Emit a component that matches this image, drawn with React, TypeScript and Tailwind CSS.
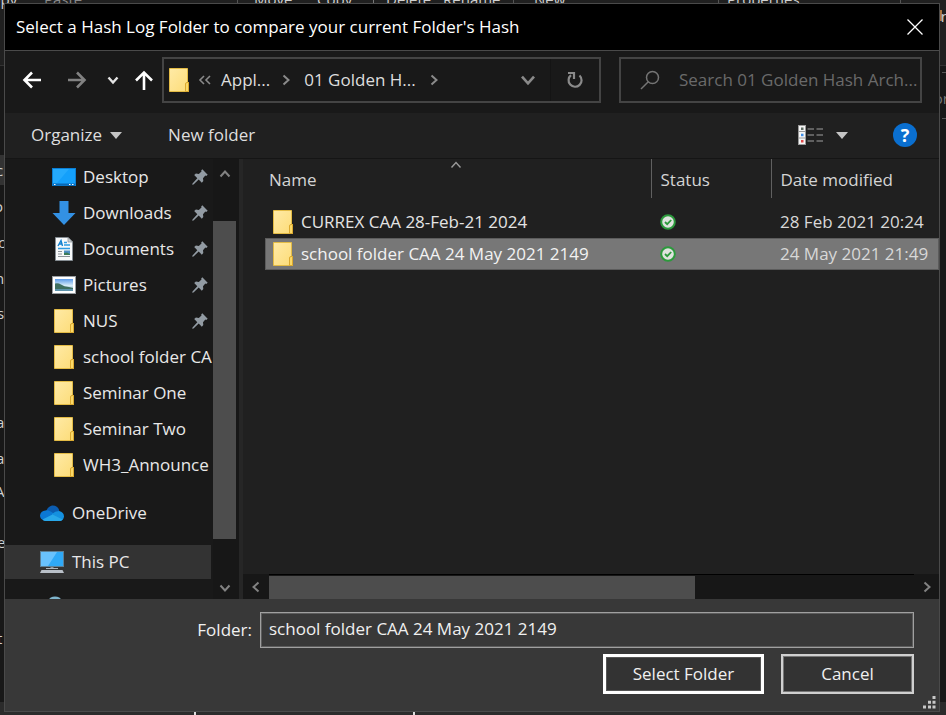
import React from "react";

const FONT = "font-['Segoe_UI','Open_Sans','Noto_Sans',sans-serif]";

function FolderIcon() {
  return (
    <svg width="20" height="24" viewBox="0 0 20 24" className="shrink-0" aria-hidden="true">
      <defs>
        <linearGradient id="folder" x1="0" y1="0" x2="1" y2="1">
          <stop offset="0" stopColor="#ffeaa6" />
          <stop offset="1" stopColor="#fcdc78" />
        </linearGradient>
      </defs>
      <path d="M.5 .5H18.5V14.5H19.5V23.5H.5Z" fill="url(#folder)" stroke="#e3bb45" />
      <path d="M16.5 23V16Q16.5 14.5 18 14.5H19.5V23.5H16.5Z" fill="#fbd968" stroke="#dba92f" />
    </svg>
  );
}

function DesktopIcon() {
  return (
    <svg width="24" height="24" viewBox="0 0 24 24" className="shrink-0" aria-hidden="true">
      <rect x=".5" y="3.500" width="23" height="17" fill="#14a0fb" stroke="#0b7fd4" />
      <path d="M1 4H17L5 18H1Z" fill="#2fb0ff" opacity=".6" />
      <path d="M1 18.500H23V20.500H1Z" fill="#0968b4" />
      <path d="M2 19h1.500v1H2zM17 19h1.500v1H17zM20 19h1.500v1H20z" fill="#fff" />
    </svg>
  );
}

function DownloadIcon() {
  return (
    <svg width="24" height="24" viewBox="0 0 24 24" className="shrink-0" aria-hidden="true">
      <path d="M7.500 0H16.500V12H23.500L12 24L.5 12H7.500Z" fill="#3391e4" />
    </svg>
  );
}

function DocumentIcon() {
  return (
    <svg width="24" height="24" viewBox="0 0 24 24" className="shrink-0" aria-hidden="true">
      <path d="M3.500 .5H16L20.500 5V23.500H3.500Z" fill="#f7f9fa" stroke="#858c92" />
      <path d="M16 .5V5H20.500Z" fill="#cfd3d6" stroke="#858c92" strokeWidth=".7" />
      <path d="M6 9L9 3.500L10.500 9M7 7H10" stroke="#1180cf" strokeWidth="1.400" fill="none" />
      <path d="M12 5.500H15M12 8H18M6 11.500H18" stroke="#2f9be0" strokeWidth="1.500" />
      <path d="M6 14.500H10M6 17H10M6 19.500H18" stroke="#8b9297" strokeWidth="1.200" />
      <rect x="12" y="13.500" width="6" height="4.500" fill="#4d8ec4" />
      <path d="M12 18V16L15 15.500L18 17V18Z" fill="#3c7a58" />
    </svg>
  );
}

function PictureIcon() {
  return (
    <svg width="24" height="24" viewBox="0 0 24 24" className="shrink-0" aria-hidden="true">
      <defs>
        <linearGradient id="sky" x1="0" y1="0" x2="0" y2="1">
          <stop offset="0" stopColor="#5a9ae8" />
          <stop offset=".55" stopColor="#d8ecf8" />
          <stop offset="1" stopColor="#6f9db4" />
        </linearGradient>
      </defs>
      <rect x=".5" y="3.500" width="23" height="17" fill="#fff" stroke="#999ea2" />
      <rect x="3" y="6" width="18" height="12" fill="url(#sky)" />
      <path d="M3 10.500Q6 9.500 9 11.500T17 14L21 15V16H3Z" fill="#3f6f60" />
      <path d="M3 16H21V18H3Z" fill="#5d93ab" />
    </svg>
  );
}

function OneDriveIcon() {
  return (
    <svg width="24" height="24" viewBox="0 0 24 24" className="shrink-0" aria-hidden="true">
      <path d="M6 12Q6.500 6 12 4.500Q18.500 4 19.500 11L13 15Z" fill="#0b5cb0" />
      <path d="M4.500 19.500Q0 18.500 0 14.500Q.5 10 5.500 9.500Q9 8.500 14 13L10 19Z" fill="#0b78d4" />
      <path d="M12 13Q15 10 19 10Q24 11 24 15.500Q23.500 19.500 20 20L12 17Z" fill="#1490df" />
      <path d="M2.500 18.500L12.500 13.500L22.500 18.500Q21.500 20 19.500 20H5.500Q3.500 20 2.500 18.500Z" fill="#28a8ea" />
    </svg>
  );
}

function ComputerIcon() {
  return (
    <svg width="24" height="24" viewBox="0 0 24 24" className="shrink-0" aria-hidden="true">
      <rect x=".5" y="1.500" width="23" height="15" fill="#2fa9f7" stroke="#5c7f96" />
      <path d="M1 2H17L8 16H1Z" fill="#7dcbff" opacity=".75" />
      <path d="M10.500 17H13.500V19H10.500Z" fill="#8b949c" />
      <path d="M6 18.500H18" stroke="#aeb6bd" />
      <path d="M1.500 20H22.500L24 23H0Z" fill="#b9c0c8" />
    </svg>
  );
}

function DriveTopIcon() {
  return (
    <svg width="24" height="24" viewBox="0 0 24 24" className="shrink-0" aria-hidden="true">
      <ellipse cx="15" cy="4" rx="6" ry="3.500" fill="#7fb4cc" />
      <rect x="9" y="4" width="12" height="16" fill="#4a8aa8" />
    </svg>
  );
}

function PinIcon() {
  return (
    <svg width="16" height="16" viewBox="0 0 16 16" className="shrink-0" aria-hidden="true">
      <path d="M10.300 .3L15.700 5.700L14.200 7L13.300 6.600L11 9.200L11.300 12L9.800 13.700L6.700 10.600L1.500 15.500L.2 15.800L.5 14.400L5.300 9.200L2.200 6L3.900 4.500L6.800 4.900L9.500 2.600L9.200 1.500Z" fill="#929ba3" />
    </svg>
  );
}

function SyncedIcon() {
  return (
    <svg width="16" height="16" viewBox="0 0 16 16" role="img" aria-label="Synced">
      <circle cx="8" cy="8" r="6.800" fill="#dfe3df" stroke="#2c9a3c" strokeWidth="2" />
      <path d="M5 8L7.200 10.200L11.200 6" fill="none" stroke="#2c9a3c" strokeWidth="1.800" />
    </svg>
  );
}

type Dir = "up" | "down" | "left" | "right";
const chevronPaths: Record<Dir, string> = {
  up: "M1.500 8.500L6 3.500L10.500 8.500",
  down: "M1.500 3.500L6 8.500L10.500 3.500",
  left: "M8.500 1.500L3.500 6L8.500 10.500",
  right: "M3.500 1.500L8.500 6L3.500 10.500",
};

function Chevron({ dir, size = 12, width = 2 }: { dir: Dir; size?: number; width?: number }) {
  return (
    <svg width={size} height={size} viewBox="0 0 12 12" fill="none" stroke="currentColor" strokeWidth={width} aria-hidden="true">
      <path d={chevronPaths[dir]} />
    </svg>
  );
}

function Caret() {
  return (
    <svg width="12" height="7" viewBox="0 0 12 7" aria-hidden="true">
      <path d="M0 0H12L6 7Z" fill="#c4c4c4" />
    </svg>
  );
}

const quickAccess = [
  { name: "Desktop", Icon: DesktopIcon, pinned: true },
  { name: "Downloads", Icon: DownloadIcon, pinned: true },
  { name: "Documents", Icon: DocumentIcon, pinned: true },
  { name: "Pictures", Icon: PictureIcon, pinned: true },
  { name: "NUS", Icon: FolderIcon, pinned: true },
  { name: "school folder CA", Icon: FolderIcon, pinned: false },
  { name: "Seminar One", Icon: FolderIcon, pinned: false },
  { name: "Seminar Two", Icon: FolderIcon, pinned: false },
  { name: "WH3_Announce", Icon: FolderIcon, pinned: false },
];

const files = [
  { name: "CURREX CAA 28-Feb-21 2024", date: "28 Feb 2021 20:24", selected: false },
  { name: "school folder CAA 24 May 2021 2149", date: "24 May 2021 21:49", selected: true },
];

/* The explorer window that shows around the edges of the dialog. */
function BackgroundWindow() {
  return (
    <div className="absolute inset-0 overflow-hidden bg-[#181818] text-[15px] leading-5 text-[#d0d0d0]" aria-hidden="true">
      <div className="absolute inset-x-0 top-0 h-[66px] border-b border-[#333] bg-[#202020]" />
      <div className="absolute inset-x-0 bottom-0 h-[13px] bg-[#2b2b2b]" />
      <span className="absolute -top-[11px] -left-[18px]">Copy</span>
      <span className="absolute -top-[11px] left-[44px] text-[#8a8a8a]">Paste</span>
      <span className="absolute -top-[11px] left-[254px]">Move</span>
      <span className="absolute -top-[11px] left-[317px]">Copy</span>
      <span className="absolute -top-[11px] left-[386px]">Delete</span>
      <span className="absolute -top-[11px] left-[443px]">Rename</span>
      <span className="absolute -top-[11px] left-[534px]">New</span>
      <span className="absolute -top-[11px] left-[727px]">Properties</span>
      <i className="absolute top-0 left-[237px] h-1 w-px bg-[#555]" />
      <i className="absolute top-0 left-[373px] h-1 w-px bg-[#777]" />
      <i className="absolute top-0 left-[513px] h-1 w-px bg-[#555]" />
      <i className="absolute top-0 left-[718px] h-1 w-px bg-[#555]" />
      <i className="absolute top-0 left-[900px] h-1 w-px bg-[#555]" />
      <div className="absolute top-[155px] left-0 h-[30px] w-1 bg-[#333]" />
      <span className="absolute top-[160px] -left-[4px]">c</span>
      <span className="absolute top-[196px] -left-[6px]">o</span>
      <span className="absolute top-[232px] -left-[2px]">c</span>
      <span className="absolute top-[268px] -left-[5px]">n</span>
      <span className="absolute top-[303px] -left-[3px]">s</span>
      <span className="absolute top-[412px] -left-[4px]">a</span>
      <span className="absolute top-[448px] -left-[4px]">a</span>
      <span className="absolute top-[481px] -left-[5px]">A</span>
      <span className="absolute top-[532px] -left-[3px]">e</span>
      <span className="absolute top-[628px] -left-[3px]">t</span>
      <i className="absolute top-[10px] right-1 h-[11px] w-[2px] bg-[#a8743e]" />
      <span className="absolute top-[6px] -right-[4px]">n</span>
      <span className="absolute top-[88px] -right-[3px] text-[#777]">or</span>
      <i className="absolute top-[72px] right-0 h-px w-1 bg-[#555]" />
      <i className="absolute top-[118px] right-0 h-px w-1 bg-[#555]" />
      <i className="absolute bottom-0 left-[194px] h-[3px] w-[2px] bg-[#ddd]" />
      <i className="absolute bottom-0 left-[413px] h-[3px] w-[2px] bg-[#ddd]" />
    </div>
  );
}

function TitleBar() {
  return (
    <header className="flex h-[47px] shrink-0 items-center justify-between border-b border-[#4a4a4a] bg-black pr-[10px] pl-[11px]">
      <h1 className="text-[17px] leading-6 text-white">Select a Hash Log Folder to compare your current Folder's Hash</h1>
      <button aria-label="Close" className="flex size-7 items-center justify-center text-white">
        <svg width="16" height="16" viewBox="0 0 16 16" stroke="currentColor" strokeWidth="1.300" aria-hidden="true">
          <path d="M.5 .5L15.500 15.500M15.500 .5L.5 15.500" />
        </svg>
      </button>
    </header>
  );
}

function AddressRow() {
  return (
    <div className="flex h-[62px] shrink-0 items-center bg-[#191919] pr-[17px] pb-[4px] pl-[17px]">
      <nav className="flex w-[140px] shrink-0 items-center" aria-label="History">
        <button aria-label="Back" className="text-white">
          <svg width="20" height="20" viewBox="0 0 20 20" fill="none" stroke="currentColor" strokeWidth="2.600" aria-hidden="true">
            <path d="M19 10H2.500M10 2.500L2.500 10L10 17.500" />
          </svg>
        </button>
        <button aria-label="Forward" className="ml-[25px] text-[#828282]">
          <svg width="20" height="20" viewBox="0 0 20 20" fill="none" stroke="currentColor" strokeWidth="2.600" aria-hidden="true">
            <path d="M1 10H17.500M10 2.500L17.500 10L10 17.500" />
          </svg>
        </button>
        <button aria-label="Recent locations" className="ml-[20px] text-[#e4e4e4]">
          <Chevron dir="down" width={2.4} />
        </button>
        <button aria-label="Up" className="ml-[15px] text-white">
          <svg width="20" height="20" viewBox="0 0 20 20" fill="none" stroke="currentColor" strokeWidth="2.600" aria-hidden="true">
            <path d="M10 20V3M2 10.500L10 2.500L18 10.500" />
          </svg>
        </button>
      </nav>
      <div className="flex h-[46px] min-w-0 flex-1 items-center border-2 border-[#444] pl-[5px] text-[#dedede]">
        <FolderIcon />
        <button aria-label="Show parents" className="ml-[9px] flex text-[#8a8a8a]">
          <svg width="14" height="10" viewBox="0 0 14 10" fill="none" stroke="currentColor" strokeWidth="1.600" aria-hidden="true">
            <path d="M6 1L2 5L6 9M12 1L8 5L12 9" />
          </svg>
        </button>
        <button className="ml-[9px] font-medium whitespace-nowrap">Appl...</button>
        <span className="ml-[10px] text-[#8a8a8a]"><Chevron dir="right" /></span>
        <button className="ml-[12px] font-medium whitespace-nowrap">01 Golden H...</button>
        <span className="ml-[12px] text-[#8a8a8a]"><Chevron dir="right" /></span>
        <button aria-label="Previous locations" className="ml-auto mr-[14px] text-[#8a8a8a]">
          <Chevron dir="down" size={16} />
        </button>
        <button aria-label="Refresh" className="flex h-full w-[49px] items-center justify-center border-l border-[#141414] text-[#8a8a8a]">
          <svg width="18" height="18" viewBox="0 0 18 18" fill="none" stroke="currentColor" strokeWidth="2.200" aria-hidden="true">
            <path d="M13.500 4.500A6.500 6.500 0 1 1 5 4.200M2 2H8V8" />
          </svg>
        </button>
      </div>
      <label className="ml-[18px] flex h-[46px] w-[303px] shrink-0 items-center border-2 border-[#444] pl-[19px]">
        <svg width="20" height="20" viewBox="0 0 20 20" fill="none" stroke="#747474" strokeWidth="1.500" aria-hidden="true">
          <circle cx="12.500" cy="7.500" r="6" />
          <path d="M8.300 11.700L1 19" />
        </svg>
        <input
          type="text"
          aria-label="Search"
          placeholder="Search 01 Golden Hash Arch..."
          className="ml-[19px] min-w-0 flex-1 bg-transparent outline-none placeholder:text-[#6a6a6a]"
        />
      </label>
    </div>
  );
}

function Toolbar() {
  return (
    <div className="flex h-[46px] shrink-0 items-center border-b border-[#151515] bg-[#202020] pr-[22px] pb-px pl-[26px] text-[#dedede]">
      <button className="flex items-center gap-2">
        Organize <Caret />
      </button>
      <button className="ml-[46px]">New folder</button>
      <button aria-label="Change your view" className="ml-auto">
        <svg width="26" height="20" viewBox="0 0 26 20" aria-hidden="true">
          <rect x=".5" y=".5" width="7" height="19" fill="#f5f5f5" stroke="#9a9a9a" />
          <path d="M1 6.500H7M1 13H7" stroke="#9a9a9a" />
          <rect x="3" y="2.500" width="2.500" height="2.500" fill="#5d6b63" />
          <rect x="3" y="8.700" width="2.500" height="2.500" fill="#3e8ee8" />
          <rect x="3" y="15" width="2.500" height="2.500" fill="#e04848" />
          <path d="M9.500 4H16M18.500 4H25M9.500 10H16M18.500 10H25M9.500 16H16M18.500 16H25" stroke="#757575" strokeWidth="1.400" />
        </svg>
      </button>
      <button aria-label="More views" className="ml-[12px]">
        <Caret />
      </button>
      <button aria-label="Help" className="ml-[45px] flex size-6 items-center justify-center rounded-full bg-[#0a6fd0] text-[18px] leading-6 font-bold text-white">
        ?
      </button>
    </div>
  );
}

function Sidebar() {
  return (
    <div className="flex w-[234px] shrink-0 bg-[#191919]">
      <ul className="h-full min-w-0 flex-1 overflow-hidden">
        {quickAccess.map(({ name, Icon, pinned }) => (
          <li key={name} className="flex h-9 items-center pr-[5px] pl-[47px]">
            <span className="flex w-6 shrink-0 justify-center"><Icon /></span>
            <span className="-mr-1 ml-[7px] min-w-0 flex-1 whitespace-nowrap">{name}</span>
            {pinned && <PinIcon />}
          </li>
        ))}
        <li className="mt-3 flex h-9 items-center gap-2 pl-[35px]"><OneDriveIcon />OneDrive</li>
        <li className="mt-[14px] mr-[2px] flex h-[34px] items-center gap-2 bg-[#333] pl-[35px]"><ComputerIcon />This PC</li>
        <li className="mt-[17px] flex h-9 items-start pl-[35px]"><DriveTopIcon /></li>
      </ul>
      <div className="flex w-[26px] shrink-0 flex-col items-center bg-[#171717] pr-[3px] text-[#828282]">
        <span className="flex h-[62px] items-start pt-[9px]"><Chevron dir="up" /></span>
        <span className="w-[23px] flex-1 bg-[#4d4d4d]" />
        <span className="flex h-[60px] items-end pb-[5px]"><Chevron dir="down" /></span>
      </div>
    </div>
  );
}

function FileList() {
  return (
    <div className="flex min-w-0 flex-1 flex-col border-l-4 border-[#262626] bg-[#202020]">
      <div className="min-h-0 flex-1 overflow-hidden pl-[22px]">
        <table className="w-full table-fixed border-collapse text-left">
          <thead>
            <tr className="h-[39px] text-[#d4d4d4]">
              <th className="relative pt-[2px] pl-[4px] font-normal">
                Name
                <span className="absolute top-0 left-1/2 -ml-[8px] text-[#9a9a9a]"><Chevron dir="up" width={1.4} /></span>
              </th>
              <th className="w-[120px] border-l border-[#606060] pt-[2px] pl-[9px] font-normal">Status</th>
              <th className="w-[168px] border-l border-[#606060] pt-[2px] pl-[9px] font-normal whitespace-nowrap">Date modified</th>
            </tr>
          </thead>
          <tbody>
            <tr className="h-[8px]"><td colSpan={3} className="p-0" /></tr>
            {files.map((f) => (
              <tr key={f.name} className={f.selected ? "h-8 bg-[#777] text-[#f2f2f2] outline-1 -outline-offset-1 outline-[#5c5c5c]" : "h-8 text-[#e4e4e4]"}>
                <td className="p-0">
                  <span className="flex items-center gap-[8px] pl-[8px] whitespace-nowrap"><FolderIcon />{f.name}</span>
                </td>
                <td className="py-0 pr-0 pl-[9px]"><SyncedIcon /></td>
                <td className="py-0 pr-0 pl-[9px] whitespace-nowrap text-[#d8d8d8]">{f.date}</td>
              </tr>
            ))}
          </tbody>
        </table>
      </div>
      <div className="flex h-[25px] shrink-0 items-center bg-[#171717] text-[#828282]">
        <span className="flex w-[26px] justify-center"><Chevron dir="left" /></span>
        <span className="flex h-[25px] flex-1 items-center border-t border-black">
          <span className="h-[23px] w-[66%] bg-[#4d4d4d]" />
        </span>
        <span className="flex w-[25px] justify-center"><Chevron dir="right" /></span>
      </div>
    </div>
  );
}

function Footer() {
  return (
    <footer className="relative flex h-[112px] shrink-0 flex-col bg-[#383838] pt-[13px] pr-[25px] text-[#f0f0f0]">
      <div className="flex items-center">
        <label htmlFor="folder-name" className="w-[247px] shrink-0 text-right">Folder:</label>
        <input
          id="folder-name"
          type="text"
          defaultValue="school folder CAA 24 May 2021 2149"
          className="ml-[8px] h-[36px] min-w-0 flex-1 border border-[#a0a0a0] bg-[#383838] px-[8px] pb-[3px] inset-ring inset-ring-[#5c5c5c] outline-none"
        />
      </div>
      <div className="mt-[6px] flex justify-end gap-[17px]">
        <button className="h-10 w-[161px] border-[3px] border-white bg-[#333] inset-ring inset-ring-[#555]">Select Folder</button>
        <button className="h-10 w-[133px] border-2 border-[#d0d0d0] bg-[#333] inset-ring inset-ring-[#777]">Cancel</button>
      </div>
      <svg width="13" height="13" viewBox="0 0 13 13" fill="#c8c8c8" className="absolute right-[3px] bottom-[2px]" aria-hidden="true">
        <path d="M9.500 0h3v3h-3zM5 4.700h3v3H5zM9.500 4.700h3v3h-3zM0 9.500h3v3H0zM5 9.500h3v3H5zM9.500 9.500h3v3h-3z" />
      </svg>
    </footer>
  );
}

export default function App() {
  return (
    <div className={`relative flex h-screen overflow-hidden pt-[3px] pr-[6px] pb-[3px] pl-1 text-[17px] leading-6 ${FONT}`}>
      <BackgroundWindow />
      <main className="relative flex min-w-0 flex-1 flex-col border border-[#4a4a4a] bg-[#202020] text-[#e8e8e8]">
        <TitleBar />
        <AddressRow />
        <Toolbar />
        <div className="flex min-h-0 flex-1">
          <Sidebar />
          <FileList />
        </div>
        <Footer />
      </main>
    </div>
  );
}
